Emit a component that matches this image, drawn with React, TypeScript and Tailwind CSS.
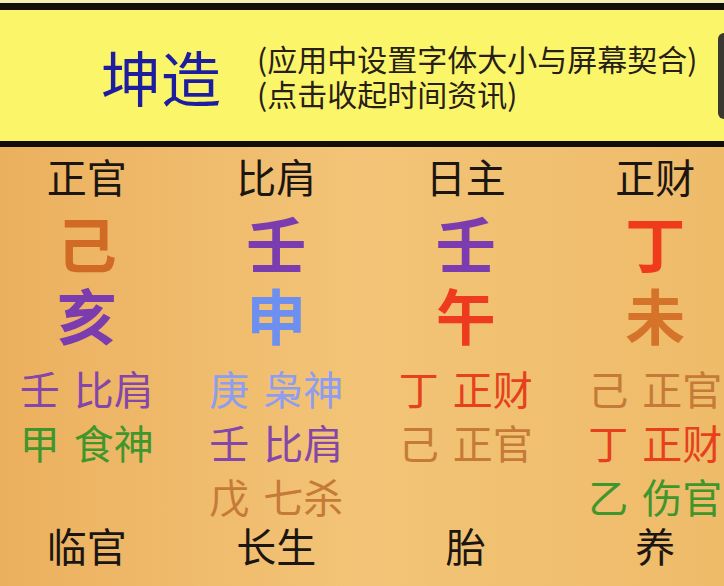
const font = "font-['Noto_Sans_CJK_SC','Noto_Sans',sans-serif]";

type Hidden = { stem: string; god: string; color: string };

type Pillar = {
  title: string;
  stem: string;
  stemColor: string;
  branch: string;
  branchColor: string;
  hidden: Hidden[];
  stage: string;
};

const pillars: Pillar[] = [
  {
    title: '正官',
    stem: '己',
    stemColor: 'text-[#d06a24]',
    branch: '亥',
    branchColor: 'text-[#7a3cae]',
    hidden: [
      { stem: '壬', god: '比肩', color: 'text-[#8446a8]' },
      { stem: '甲', god: '食神', color: 'text-[#3f962c]' },
    ],
    stage: '临官',
  },
  {
    title: '比肩',
    stem: '壬',
    stemColor: 'text-[#7a3cae]',
    branch: '申',
    branchColor: 'text-[#6c8ff0]',
    hidden: [
      { stem: '庚', god: '枭神', color: 'text-[#8d9df0]' },
      { stem: '壬', god: '比肩', color: 'text-[#8446a8]' },
      { stem: '戊', god: '七杀', color: 'text-[#c67a38]' },
    ],
    stage: '长生',
  },
  {
    title: '日主',
    stem: '壬',
    stemColor: 'text-[#7a3cae]',
    branch: '午',
    branchColor: 'text-[#ee3a1e]',
    hidden: [
      { stem: '丁', god: '正财', color: 'text-[#e6401c]' },
      { stem: '己', god: '正官', color: 'text-[#c67a38]' },
    ],
    stage: '胎',
  },
  {
    title: '正财',
    stem: '丁',
    stemColor: 'text-[#f03a1c]',
    branch: '未',
    branchColor: 'text-[#d6732a]',
    hidden: [
      { stem: '己', god: '正官', color: 'text-[#c67a38]' },
      { stem: '丁', god: '正财', color: 'text-[#e6401c]' },
      { stem: '乙', god: '伤官', color: 'text-[#3f962c]' },
    ],
    stage: '养',
  },
];

function PillarColumn({ p }: { p: Pillar }) {
  return (
    <div className="flex flex-col items-center whitespace-nowrap">
      <div className="h-[58px] pt-[6px] text-[40px] leading-[46px] text-[#1c1612]">{p.title}</div>
      <div className={`h-[74px] text-[60px] leading-[74px] font-bold ${p.stemColor}`}>{p.stem}</div>
      <div className={`h-[82px] text-[60px] leading-[70px] font-bold ${p.branchColor}`}>{p.branch}</div>
      <div className="flex h-[162px] flex-col items-center">
        {p.hidden.map((h, i) => (
          <div key={i} className={`flex h-[54px] gap-[14px] text-[40px] leading-[54px] ${h.color}`}>
            <span>{h.stem}</span>
            <span>{h.god}</span>
          </div>
        ))}
      </div>
      <div className="h-[50px] text-[40px] leading-[44px] text-[#1c1612]">{p.stage}</div>
    </div>
  );
}

export default function App() {
  return (
    <div className={`w-[724px] h-[586px] overflow-hidden flex flex-col ${font}`}>
      {/* Header panel */}
      <div className="h-[3px] bg-[#f3ecb4]" />
      <div className="h-[7px] bg-[#120d08]" />
      <div className="flex h-[131px] items-center bg-[#fbf56a] pl-[101px] whitespace-nowrap">
        <div className="shrink-0 text-[60px] leading-[70px] text-[#1d1da0]">坤造</div>
        <div className="ml-[36px] flex shrink-0 flex-col text-[30px] leading-[35px] text-[#262018]">
          <span>(应用中设置字体大小与屏幕契合)</span>
          <span>(点击收起时间资讯)</span>
        </div>
        <div className="ml-auto h-[86px] w-[6px] shrink-0 rounded-l-[8px] bg-[#3a3630]" />
      </div>
      <div className="h-[6px] bg-[#120d08]" />

      {/* Chart */}
      <div className="flex-1 bg-linear-to-r from-[#ebb05e] via-[#f3c477] to-[#eebb69]">
        <div className="-ml-[8px] grid w-[758px] grid-cols-4">
          {pillars.map((p, i) => (
            <PillarColumn key={i} p={p} />
          ))}
        </div>
      </div>
    </div>
  );
}
